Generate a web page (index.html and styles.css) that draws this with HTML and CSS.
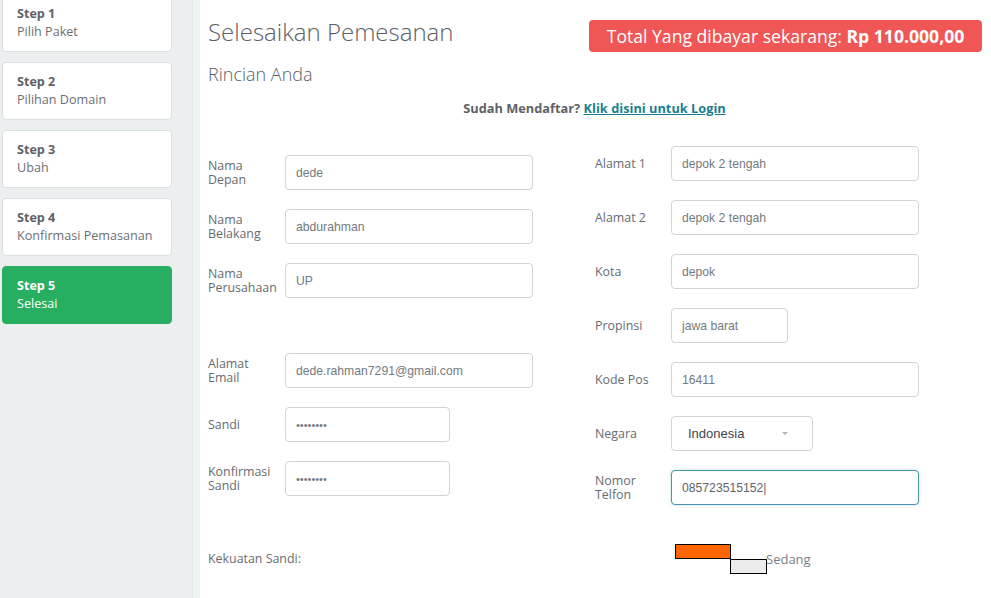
FILE: index.html
```html
<!DOCTYPE html>
<html lang="id">
<head>
<meta charset="utf-8">
<title>Selesaikan Pemesanan</title>
<link rel="stylesheet" href="styles.css">
</head>
<body>
<div class="page">
  <aside class="sidebar">
    <ol class="steps">
      <li class="step"><strong>Step 1</strong><span>Pilih Paket</span></li>
      <li class="step"><strong>Step 2</strong><span>Pilihan Domain</span></li>
      <li class="step"><strong>Step 3</strong><span>Ubah</span></li>
      <li class="step"><strong>Step 4</strong><span>Konfirmasi Pemasanan</span></li>
      <li class="step active"><strong>Step 5</strong><span>Selesai</span></li>
    </ol>
  </aside>
  <main class="main">
    <div class="head">
      <h1 class="title">Selesaikan Pemesanan</h1>
      <div class="total">Total Yang dibayar sekarang: <b>Rp 110.000,00</b></div>
    </div>
    <h2 class="subtitle">Rincian Anda</h2>
    <p class="login-note">Sudah Mendaftar? <a href="#">Klik disini untuk Login</a></p>
    <form class="form">
      <div class="col col-left">
        <div class="row"><label class="lbl">Nama<br>Depan</label><input class="field" type="text" value="dede"></div>
        <div class="row"><label class="lbl">Nama<br>Belakang</label><input class="field" type="text" value="abdurahman"></div>
        <div class="row"><label class="lbl">Nama<br>Perusahaan</label><input class="field" type="text" value="UP"></div>
        <div class="row row-gap"><label class="lbl">Alamat<br>Email</label><input class="field" type="text" value="dede.rahman7291@gmail.com"></div>
        <div class="row"><label class="lbl">Sandi</label><input class="field short" type="password" value="12345678"></div>
        <div class="row"><label class="lbl">Konfirmasi<br>Sandi</label><input class="field short" type="password" value="12345678"></div>
      </div>
      <div class="col col-right">
        <div class="row"><label class="lbl">Alamat 1</label><input class="field" type="text" value="depok 2 tengah"></div>
        <div class="row"><label class="lbl">Alamat 2</label><input class="field" type="text" value="depok 2 tengah"></div>
        <div class="row"><label class="lbl">Kota</label><input class="field" type="text" value="depok"></div>
        <div class="row"><label class="lbl">Propinsi</label><input class="field tiny" type="text" value="jawa barat"></div>
        <div class="row"><label class="lbl">Kode Pos</label><input class="field" type="text" value="16411"></div>
        <div class="row"><label class="lbl">Negara</label><div class="select-wrap"><select class="select"><option>Indonesia</option></select></div></div>
        <div class="row"><label class="lbl">Nomor<br>Telfon</label><input class="field focus" type="text" value="085723515152|"></div>
      </div>
      <div class="strength">
        <span class="lbl">Kekuatan Sandi:</span>
        <div class="meter">
          <span class="bar bar-on"></span>
          <span class="bar bar-off"></span>
          <span class="meter-text">Sedang</span>
        </div>
      </div>
    </form>
  </main>
</div>
</body>
</html>
```
FILE: styles.css
```css
* { box-sizing: border-box; }
html, body { margin: 0; padding: 0; background: #fff; }
body { font-family: "Open Sans", "Liberation Sans", sans-serif; color: #555; overflow: hidden; }

.page { display: flex; width: 991px; height: 598px; }

.sidebar {
  width: 200px;
  flex: none;
  padding-left: 2px;
  background: linear-gradient(to right, #ebeff0 192px, #e2e6e7 192px, #e2e6e7 193px, #f1f4f4 193px);
}
.steps { list-style: none; margin: -6px 0 0; padding: 0; display: flex; flex-direction: column; gap: 10px; }
.step {
  width: 170px;
  height: 58px;
  padding: 10px 14px;
  background: #fff;
  border: 1px solid #dadfe1;
  border-radius: 4px;
  font-size: 12.6px;
  line-height: 18px;
  display: flex;
  flex-direction: column;
  color: #6b6f73;
}
.step strong { color: #5e6266; font-weight: 700; }
.step.active { background: #27ae60; border-color: #27ae60; color: #fff; }
.step.active strong { color: #fff; }

.main { flex: 1; padding: 0 10px 0 8px; }
.head { display: flex; justify-content: space-between; align-items: flex-start; }
.title { margin: 19px 0 0; font-size: 24px; line-height: 26px; font-weight: 300; color: #5b6064; }
.total {
  margin-top: 20px;
  margin-right: -1px;
  width: 393px;
  height: 32px;
  background: #f15656;
  color: #fff;
  border-radius: 4px;
  font-size: 17.6px;
  line-height: 32px;
  text-align: center;
  font-weight: 400;
}
.total b { font-weight: 700; }
.subtitle { margin: 11px 0 0; font-size: 18px; line-height: 22px; font-weight: 300; color: #5b6064; }
.login-note { margin: 14px 0 0; text-align: center; font-size: 12.8px; line-height: 18px; font-weight: 700; color: #5e6266; }
.login-note a { color: #1b7f8f; text-decoration: underline; }

.form { display: grid; grid-template-columns: 387px 1fr; }
.col { display: flex; flex-direction: column; gap: 19px; }
.col-left { padding-top: 38px; }
.col-right { padding-top: 29px; }
.row { display: flex; align-items: center; height: 35px; }
.row-gap { margin-top: 36px; }
.lbl { font-size: 12.4px; line-height: 14px; color: #676b6f; }
.col-left .lbl { width: 77px; }
.col-right .lbl { width: 76px; }

.field {
  width: 248px;
  height: 35px;
  padding: 0 10px;
  border: 1px solid #cfd4d7;
  border-radius: 4px;
  font-family: "Liberation Sans", Arial, sans-serif;
  font-size: 12.2px;
  color: #747a7e;
  background: #fff;
  outline: none;
}
.field.short { width: 165px; }
.field.tiny { width: 117px; }
.field[type="password"] { font-size: 11px; letter-spacing: 0; }
.field.focus { border-color: #4f93a8; box-shadow: 0 0 3px rgba(102, 175, 200, 0.5); color: #5d6266; }

.select-wrap { position: relative; width: 142px; height: 35px; }
.select {
  width: 142px;
  height: 35px;
  padding: 0 0 0 16px;
  border: 1px solid #cfd4d7;
  border-radius: 4px;
  background: #fff;
  font-family: "Liberation Sans", Arial, sans-serif;
  font-size: 13px;
  color: #3c4650;
  -webkit-appearance: none;
  appearance: none;
  outline: none;
}
.select-wrap::after {
  content: "";
  position: absolute;
  left: 111px;
  top: 16px;
  border-left: 3px solid transparent;
  border-right: 3px solid transparent;
  border-top: 3px solid #b0b5b9;
}

.strength { grid-column: 1 / 3; display: grid; grid-template-columns: 467px 1fr; align-items: center; margin-top: 39px; height: 30px; }
.meter { display: flex; height: 30px; }
.bar { display: block; border: 1px solid #000; }
.bar-on { width: 56px; height: 15px; background: #ff6600; align-self: flex-start; }
.bar-off { width: 37px; height: 15px; background: #ececec; align-self: flex-end; margin-left: -1px; }
.meter-text { align-self: center; font-size: 13px; color: #7a7e82; margin-top: -1px; margin-left: -1px; }
```
